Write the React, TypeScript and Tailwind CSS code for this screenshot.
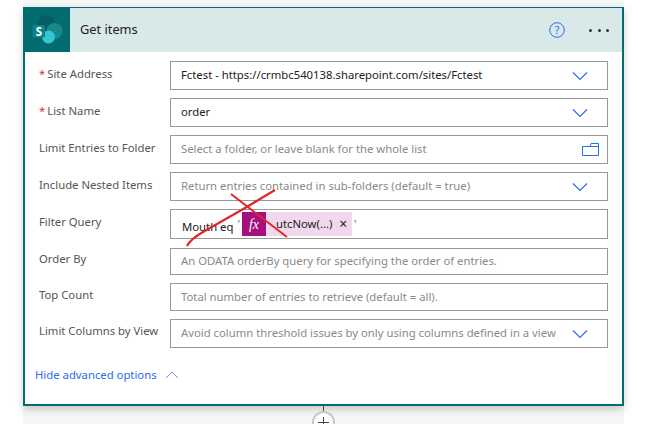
import React from "react";

const Chevron = () => (
  <svg width="16" height="10" viewBox="0 0 16 10" fill="none" className="shrink-0">
    <path d="M1 1.5 L8 8.5 L15 1.5" stroke="#2b6cf0" strokeWidth="1.2" />
  </svg>
);

const Folder = () => (
  <svg width="17" height="13" viewBox="0 0 17 13" fill="none" className="-mr-[11px] shrink-0">
    <path d="M0.5 3.5 H8 L9 1 V0.5 H16.5 V12.5 H0.5 Z M8 3.5 H16.5" stroke="#1f6ff0" strokeWidth="1" />
  </svg>
);

function Row({ label, req, value, placeholder, icon, h = "h-[29px]", pt = "pt-[4px]", rh = "h-[37px]" }: { label: string; req?: boolean; value?: string; placeholder?: string; icon?: React.ReactNode; h?: string; pt?: string; rh?: string }) {
  return (
    <div className={`flex ${rh} items-start`}>
      <div className={`w-[131px] shrink-0 ${pt} text-[11.3px] leading-[18px] text-[#555]`}>
        {req && <span className="mr-[2px] text-[#d13438]">*</span>}
        {label}
      </div>
      <div className={`flex ${h} w-[438px] items-center justify-between border border-[#999] pl-[10px] pr-[19px] text-[11.3px]`}>
        <span className={`whitespace-nowrap ${value ? "text-[#222]" : "text-[#8a8a8a]"}`}>{value ?? placeholder}</span>
        {icon}
      </div>
    </div>
  );
}

export default function App() {
  return (
    <div className="relative h-[424px] w-[663px] overflow-hidden bg-white" style={{ fontFamily: '"Noto Sans", sans-serif' }}>
      <div className="ml-[23px] h-[424px] w-[601px] bg-[#f6f6f6] pt-[7px]">
        <div className="relative h-[399px] w-[601px] border-2 border-t-[1px] border-l-[2px] border-[#036c70] bg-white shadow-[0_3px_8px_rgba(0,0,0,0.2)]">
          <div className="flex h-[44px] items-center bg-[#d9e8e8]">
            <div className="flex h-[44px] w-[45px] shrink-0 items-center justify-center bg-[#036c70]">
              <svg width="32" height="32" viewBox="0 0 32 32">
                <circle cx="14.5" cy="10" r="9" fill="#075e62" />
                <circle cx="22.5" cy="17" r="8" fill="#17898d" />
                <circle cx="16.5" cy="23" r="6.5" fill="#37c6d0" />
                <rect x="0.5" y="11" width="12.5" height="12.5" rx="1.5" fill="#0f8488" />
                <text x="6.8" y="21.5" textAnchor="middle" fontSize="11.5" fontWeight="700" fill="#fff" fontFamily="Noto Sans, sans-serif">S</text>
              </svg>
            </div>
            <div className="ml-[10px] text-[12.8px] text-[#222]">Get items</div>
            <div className="ml-auto mr-[13px] flex items-center gap-[24px]">
              <svg width="16" height="16" viewBox="0 0 16 16" fill="none">
                <circle cx="8" cy="8" r="7.3" stroke="#2b6cf0" strokeWidth="1" />
                <text x="8" y="12" textAnchor="middle" fontSize="10.5" fill="#2b6cf0" fontFamily="Noto Sans, sans-serif">?</text>
              </svg>
              <div className="flex gap-[5.5px]">
                <span className="h-[3px] w-[3px] rounded-full bg-[#333]" />
                <span className="h-[3px] w-[3px] rounded-full bg-[#333]" />
                <span className="h-[3px] w-[3px] rounded-full bg-[#333]" />
              </div>
            </div>
          </div>
          <div className="pl-[14px] pt-[9px]">
            <Row req label="Site Address" value="Fctest - https://crmbc540138.sharepoint.com/sites/Fctest" icon={<Chevron />} />
            <Row req label="List Name" value="order" icon={<Chevron />} />
            <Row label="Limit Entries to Folder" placeholder="Select a folder, or leave blank for the whole list" icon={<Folder />} />
            <Row label="Include Nested Items" placeholder="Return entries contained in sub-folders (default = true)" icon={<Chevron />} />
            <div className="flex h-[39px] items-start">
              <div className="w-[131px] shrink-0 pt-[4px] text-[11.3px] leading-[18px] text-[#555]">Filter Query</div>
              <div className="flex h-[30px] w-[438px] items-center border border-[#999] pl-[11px] text-[11.3px] text-[#222]">
                <span className="whitespace-nowrap pt-[7px]">Mouth eq</span>
                <span className="ml-[4px] text-[#666]">'</span>
                <span className="ml-[2px] flex h-[24px] w-[110px] items-center bg-[#f2d8ec]">
                  <span className="flex h-[24px] w-[24px] items-center justify-center bg-[#a4107d] text-[14px] italic text-white" style={{ fontFamily: '"Liberation Serif", serif' }}>fx</span>
                  <span className="ml-[10px] whitespace-nowrap">utcNow(...)</span>
                  <span className="ml-[7px] text-[14px] leading-none">×</span>
                </span>
                <span className="ml-[2px] text-[#666]">'</span>
              </div>
            </div>
            <Row label="Order By" placeholder="An ODATA orderBy query for specifying the order of entries." h="h-[27px]" pt="pt-[2px]" rh="h-[35px]" />
            <Row label="Top Count" placeholder="Total number of entries to retrieve (default = all)." h="h-[28px]" pt="pt-[3px]" rh="h-[36px]" />
            <Row label="Limit Columns by View" placeholder="Avoid column threshold issues by only using columns defined in a view" icon={<Chevron />} pt="pt-[3px]" />
            <div className="-ml-[4px] mt-[11px] flex items-center gap-[8px] text-[11.3px] text-[#2b6cf0]">
              <span className="whitespace-nowrap">Hide advanced options</span>
              <svg width="14" height="8" viewBox="0 0 14 8" fill="none">
                <path d="M1 7 L7 1 L13 7" stroke="#6f94e8" strokeWidth="1" />
              </svg>
            </div>
          </div>
        </div>
      </div>
      <div className="absolute left-[323px] top-[406px] h-[6px] w-[1px] bg-[#444]" />
      <div className="absolute left-[312px] top-[411px] flex h-[23px] w-[23px] items-center justify-center rounded-full border-2 border-[#c8c8c8] bg-white">
        <svg width="11" height="11" viewBox="0 0 11 11"><path d="M5.5 0 V11 M0 5.5 H11" stroke="#444" strokeWidth="1" /></svg>
      </div>
      <svg className="pointer-events-none absolute left-0 top-0" width="663" height="424" fill="none">
        <path d="M231 194 L287 237" stroke="#e0282a" strokeWidth="2" />
        <path d="M275 190 L245 208 L203 232 C196 236 190 240 187 246" stroke="#e0282a" strokeWidth="2.2" />
      </svg>
    </div>
  );
}
